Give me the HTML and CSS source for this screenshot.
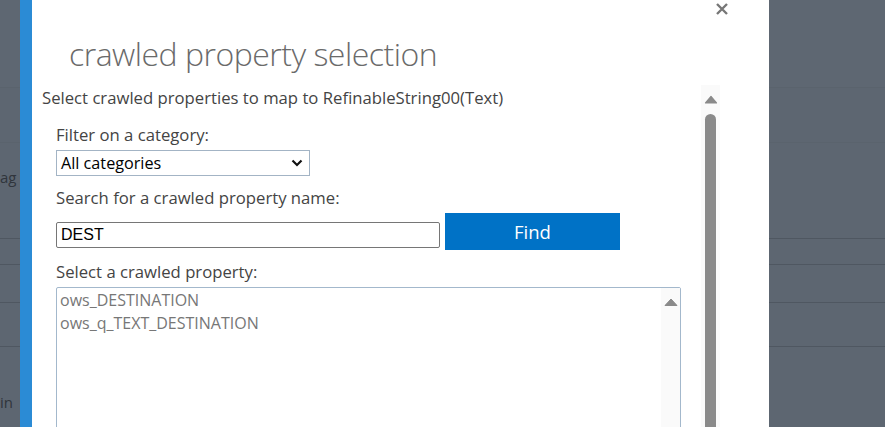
FILE: index.html
```html
<!DOCTYPE html>
<html>
<head>
<meta charset="utf-8">
<link rel="stylesheet" href="styles.css">
</head>
<body>
<div class="page">
  <div class="row r1"></div>
  <div class="row r2"></div>
  <div class="row r3"><span class="bgtext t3">ag</span></div>
  <div class="row r4"></div>
  <div class="row r5"></div>
  <div class="row r6"></div>
  <div class="row r7"><span class="bgtext t7">in</span></div>
</div>

<div class="dialog">
  <div class="dialog-edge"></div>
  <div class="dialog-main">
    <button class="close" aria-label="Close">
      <svg width="14" height="14" viewBox="0 0 14 14"><path d="M2 2 L12 12 M12 2 L2 12" stroke="#777" stroke-width="2.4" stroke-linecap="butt" fill="none"/></svg>
    </button>
    <h1 class="title">crawled property selection</h1>
    <div class="body">
      <div class="content">
        <p class="intro">Select crawled properties to map to RefinableString00(Text)</p>
        <div class="form">
          <label class="label">Filter on a category:</label>
          <div class="select">
            <span>All categories</span>
            <svg class="chev" width="12" height="8" viewBox="0 0 12 8"><path d="M1.5 1.5 L6 6 L10.5 1.5" stroke="#111" stroke-width="2.2" fill="none"/></svg>
          </div>
          <label class="label gap">Search for a crawled property name:</label>
          <div class="search-row">
            <div class="input">DEST</div>
            <button class="find">Find</button>
          </div>
          <label class="label gap">Select a crawled property:</label>
          <div class="listbox">
            <div class="items">
              <div class="item">ows_DESTINATION</div>
              <div class="item">ows_q_TEXT_DESTINATION</div>
            </div>
            <div class="list-scroll">
              <svg width="14" height="8" viewBox="0 0 14 8"><path d="M1 7.5 L7 1 L13 7.5 Z" fill="#8a8a8a" stroke="#8a8a8a" stroke-width="1" stroke-linejoin="round"/></svg>
            </div>
          </div>
        </div>
      </div>
      <div class="scrollbar">
        <svg class="sb-arrow" width="14" height="9" viewBox="0 0 14 9"><path d="M1.5 8 L7 1.5 L12.5 8 Z" fill="#8a8a8a" stroke="#8a8a8a" stroke-width="1.2" stroke-linejoin="round"/></svg>
        <div class="thumb"></div>
      </div>
    </div>
  </div>
</div>
</body>
</html>
```

FILE: styles.css
```css
* { box-sizing: border-box; }
html, body { margin: 0; padding: 0; }
body {
  width: 885px;
  height: 427px;
  overflow: hidden;
  background: #5d6671;
  font-family: "Open Sans", "Noto Sans", sans-serif;
  position: relative;
}

.page { width: 885px; }
.row { border-bottom: 1px solid #4f5761; position: relative; }
.r1 { height: 88px; border-bottom-color: #5a636d; background: #5e6772; }
.r2 { height: 55px; border-bottom-color: #5a636d; }
.r3 { height: 96px; }
.r4 { height: 26px; }
.r5 { height: 38px; }
.r6 { height: 44px; }
.r7 { height: 80px; border-bottom: none; }
.bgtext {
  display: block;
  color: #30353c;
  font-size: 15px;
  line-height: 20px;
}
.t3 { padding-top: 24px; }
.t7 { padding-top: 45px; }

.dialog {
  position: absolute;
  left: 20px;
  top: 0;
  width: 749px;
  height: 440px;
  display: flex;
  background: #fff;
}
.dialog-edge { width: 12px; background: #2b8bd5; flex: none; }
.dialog-main { flex: 1; position: relative; }

.close {
  position: absolute;
  left: 683px;
  top: 2px;
  width: 14px;
  height: 14px;
  padding: 0;
  border: 0;
  background: none;
}
.close svg { display: block; }

.title {
  margin: 0;
  padding: 32px 0 0 37px;
  height: 85px;
  font-weight: 300;
  font-size: 32px;
  line-height: 44px;
  color: #6a6a6a;
  letter-spacing: -0.5px;
}

.body { display: flex; }
.content { width: 669px; padding-left: 10px; padding-top: 3px; }
.intro {
  margin: 0;
  font-size: 16.7px;
  line-height: 20px;
  color: #444;
}
.form { padding-left: 14px; padding-top: 17px; }
.label {
  display: block;
  font-size: 16.7px;
  line-height: 20px;
  color: #444;
}
.gap { margin-top: 12px; }

.select {
  margin-top: 5px;
  width: 254px;
  height: 26px;
  border: 1px solid #a3b4c5;
  display: flex;
  align-items: center;
  justify-content: space-between;
  padding: 0 6px 0 4px;
  font-size: 16.2px;
  color: #000;
}
.chev { display: block; }

.search-row {
  margin-top: 5px;
  display: flex;
  align-items: flex-end;
  gap: 5px;
}
.input {
  width: 384px;
  height: 26px;
  margin-bottom: 2px;
  border: 1px solid #767676;
  border-radius: 2px;
  padding: 0 4px;
  font-family: "Liberation Sans", Arial, sans-serif;
  font-size: 16px;
  line-height: 24px;
  color: #000;
}
.find {
  width: 175px;
  height: 37px;
  border: 0;
  background: #0072c6;
  color: #fff;
  font-family: "Open Sans", "Noto Sans", sans-serif;
  font-size: 18.5px;
  padding: 0;
}

.listbox {
  margin-top: 5px;
  width: 625px;
  height: 160px;
  border: 1px solid #a3b8cc;
  border-radius: 2px 2px 0 0;
  display: flex;
}
.items { flex: 1; padding: 1px 0 0 3px; }
.item {
  font-size: 16px;
  line-height: 23px;
  color: #777;
}
.list-scroll {
  width: 19px;
  background: #fafafa;
  display: flex;
  justify-content: center;
  padding-top: 10px;
}
.list-scroll svg { display: block; }

.scrollbar {
  width: 19px;
  height: 360px;
  background: #fafafa;
  display: flex;
  flex-direction: column;
  align-items: center;
  padding-top: 10px;
}
.sb-arrow { display: block; }
.thumb {
  margin-top: 10px;
  width: 11px;
  flex: 1;
  background: #8a8a8a;
  border-radius: 6px 6px 0 0;
}
```
